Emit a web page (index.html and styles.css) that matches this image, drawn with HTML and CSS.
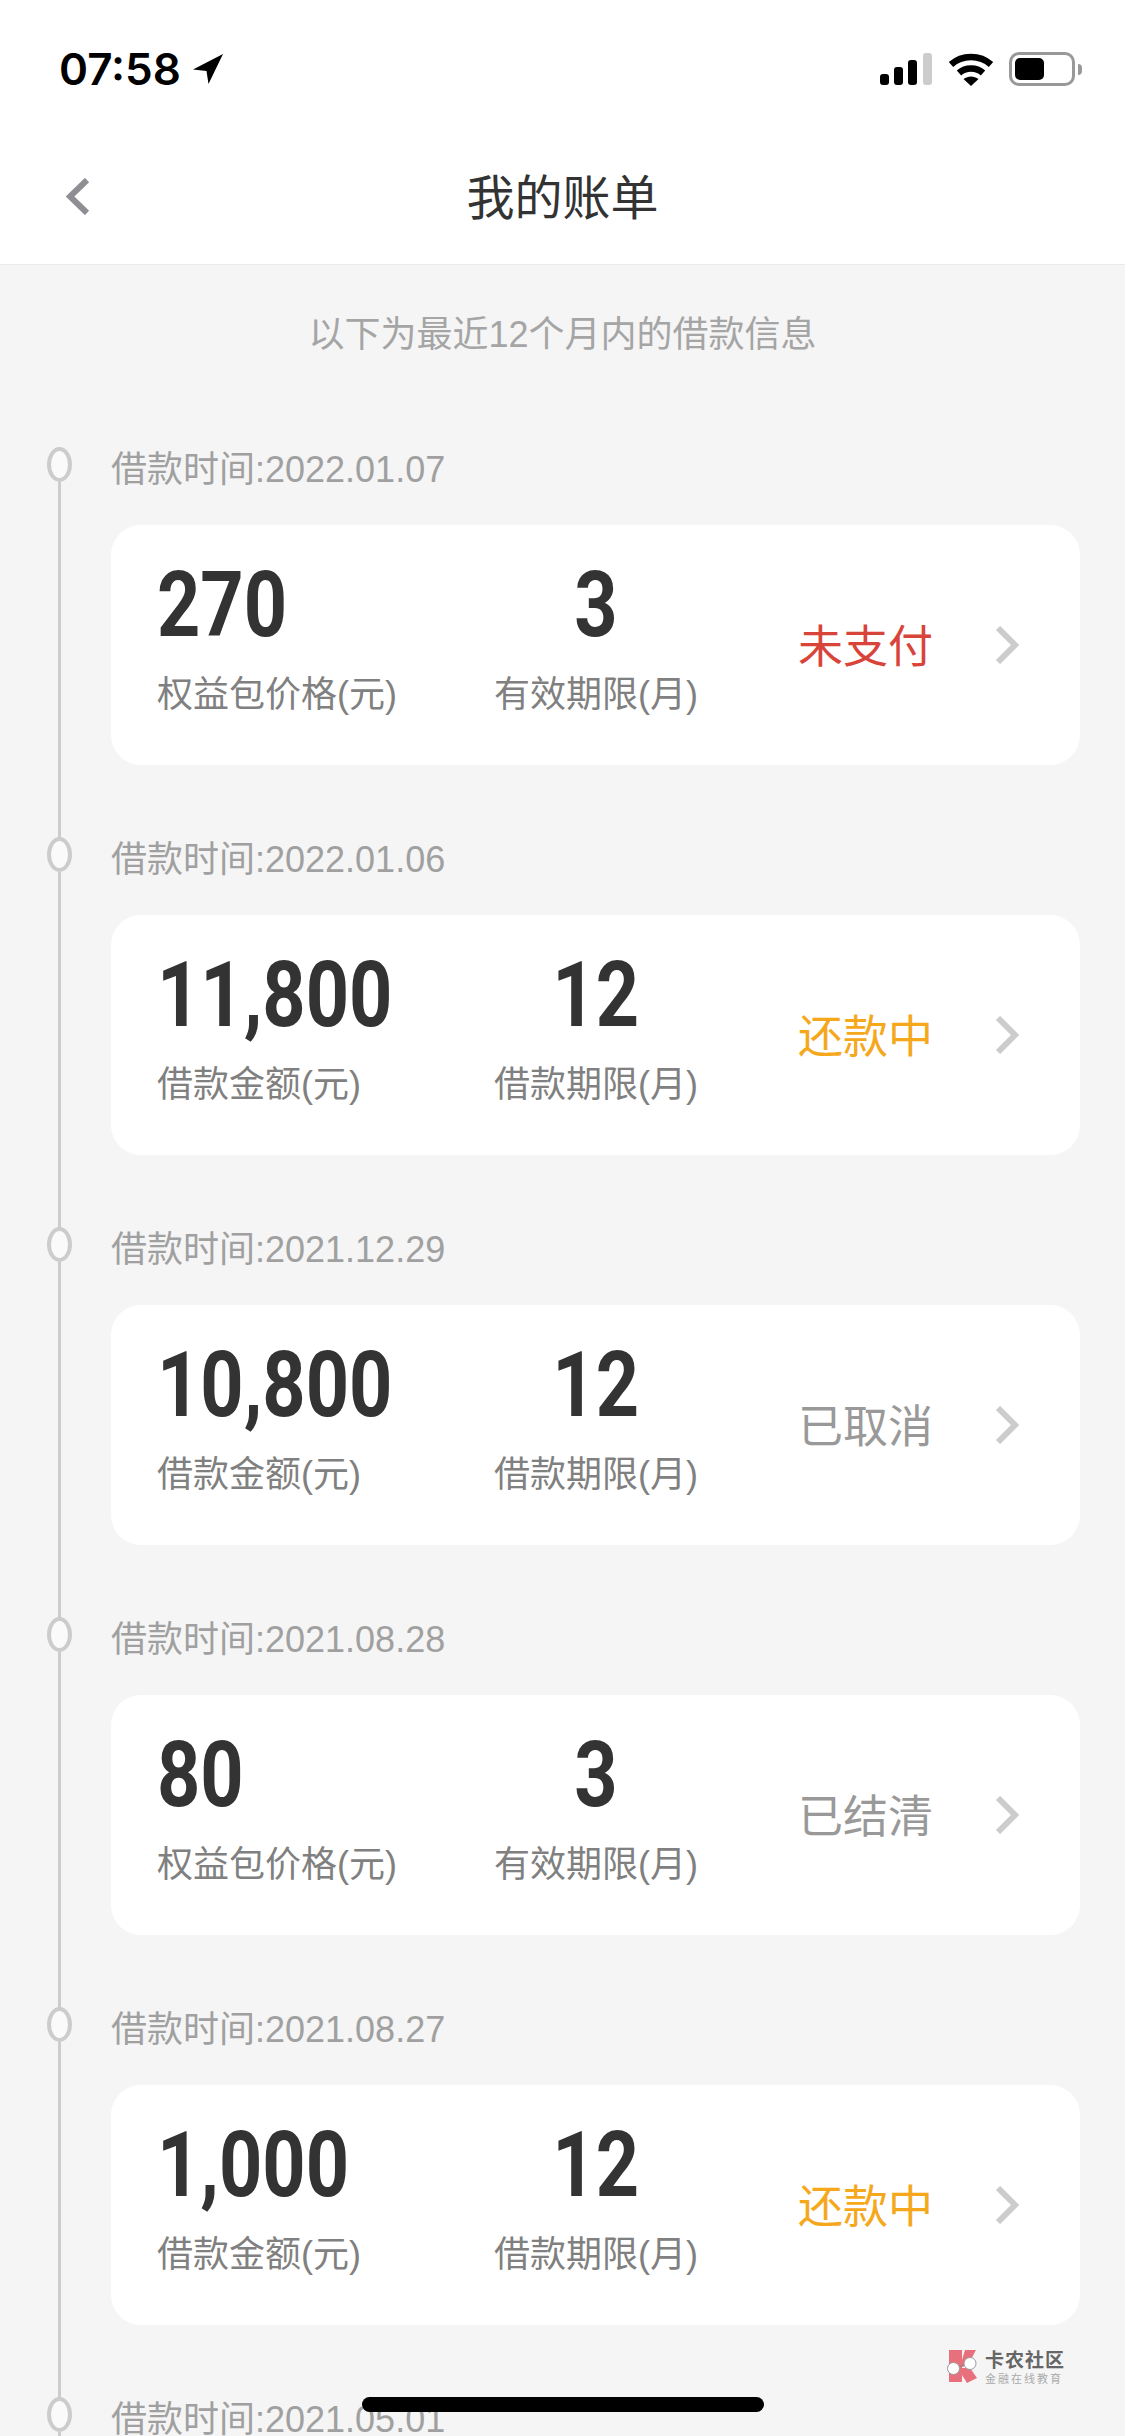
FILE: index.html
```html
<!DOCTYPE html>
<html lang="zh-CN">

<head>
    <meta charset="UTF-8">
    <title>我的账单</title>
    <link rel="stylesheet" href="styles.css">
</head>

<body>
    <div class="top">
        <div class="status">
            <div class="status-left">
                <span class="time">07:58</span>
                <svg class="arrow" width="30" height="30" viewBox="0 0 30 30"><path d="M30 0 L0 15.500 L13.500 17 L15.500 30 Z" fill="#000"/></svg>
            </div>
            <div class="status-right">
                <svg width="52" height="32" viewBox="0 0 52 32">
                    <rect x="0" y="21" width="9" height="11" rx="3" fill="#000"/>
                    <rect x="14" y="14" width="9" height="18" rx="3" fill="#000"/>
                    <rect x="28" y="7" width="9" height="25" rx="3" fill="#000"/>
                    <rect x="43" y="0" width="9" height="32" rx="3" fill="#ccc"/>
                </svg>
                <svg class="wifi" width="46" height="33" viewBox="0 0 46 33">
                    <path d="M3 11.500 C14 1.500 32 1.500 43 11.500" fill="none" stroke="#000" stroke-width="6.500"/>
                    <path d="M11 20 C17.500 14 28.500 14 35 20" fill="none" stroke="#000" stroke-width="6.500"/>
                    <path d="M15.500 26 C20 22.500 26 22.500 30.500 26 L23 33 Z" fill="#000"/>
                </svg>
                <div class="battery"><span class="battery-fill"></span></div>
                <span class="battery-cap"></span>
            </div>
        </div>
        <div class="nav">
            <svg class="back" width="24" height="37" viewBox="0 0 24 37"><path d="M21 2 L4 18.500 L21 35" fill="none" stroke="#8e8e93" stroke-width="6"/></svg>
            <h1>我的账单</h1>
        </div>
    </div>

    <div class="main">
        <p class="tip">以下为最近12个月内的借款信息</p>

        <div class="item">
            <i class="dot"></i>
            <div class="date">借款时间:2022.01.07</div>
            <div class="card">
                <div class="col col-amount"><b>270</b><span>权益包价格(元)</span></div>
                <div class="col col-term"><b>3</b><span>有效期限(月)</span></div>
                <div class="state red">未支付</div>
                <svg class="more" width="24" height="38" viewBox="0 0 24 38"><path d="M3 2 L20 19 L3 36" fill="none" stroke="#ccc" stroke-width="6"/></svg>
            </div>
        </div>

        <div class="item">
            <i class="dot"></i>
            <div class="date">借款时间:2022.01.06</div>
            <div class="card">
                <div class="col col-amount"><b>11,800</b><span>借款金额(元)</span></div>
                <div class="col col-term"><b>12</b><span>借款期限(月)</span></div>
                <div class="state orange">还款中</div>
                <svg class="more" width="24" height="38" viewBox="0 0 24 38"><path d="M3 2 L20 19 L3 36" fill="none" stroke="#ccc" stroke-width="6"/></svg>
            </div>
        </div>

        <div class="item">
            <i class="dot"></i>
            <div class="date">借款时间:2021.12.29</div>
            <div class="card">
                <div class="col col-amount"><b>10,800</b><span>借款金额(元)</span></div>
                <div class="col col-term"><b>12</b><span>借款期限(月)</span></div>
                <div class="state">已取消</div>
                <svg class="more" width="24" height="38" viewBox="0 0 24 38"><path d="M3 2 L20 19 L3 36" fill="none" stroke="#ccc" stroke-width="6"/></svg>
            </div>
        </div>

        <div class="item">
            <i class="dot"></i>
            <div class="date">借款时间:2021.08.28</div>
            <div class="card">
                <div class="col col-amount"><b>80</b><span>权益包价格(元)</span></div>
                <div class="col col-term"><b>3</b><span>有效期限(月)</span></div>
                <div class="state">已结清</div>
                <svg class="more" width="24" height="38" viewBox="0 0 24 38"><path d="M3 2 L20 19 L3 36" fill="none" stroke="#ccc" stroke-width="6"/></svg>
            </div>
        </div>

        <div class="item">
            <i class="dot"></i>
            <div class="date">借款时间:2021.08.27</div>
            <div class="card">
                <div class="col col-amount"><b>1,000</b><span>借款金额(元)</span></div>
                <div class="col col-term"><b>12</b><span>借款期限(月)</span></div>
                <div class="state orange">还款中</div>
                <svg class="more" width="24" height="38" viewBox="0 0 24 38"><path d="M3 2 L20 19 L3 36" fill="none" stroke="#ccc" stroke-width="6"/></svg>
            </div>
        </div>

        <div class="item">
            <i class="dot"></i>
            <div class="date">借款时间:2021.05.01</div>
        </div>
    </div>

    <div class="mark">
        <svg width="38" height="36" viewBox="0 0 38 36">
            <path d="M4 2 H17 V12 L20 2 H31 L23 17 L17 19 V34 H4 Z" fill="#e8707c"/>
            <path d="M17 20 H25 L32 30 L22 35 L17 27 Z" fill="#e8707c"/>
            <path d="M14 19 L19 17" fill="none" stroke="#888" stroke-width="1"/>
            <circle cx="8.500" cy="20.500" r="6" fill="#fff" stroke="#999" stroke-width="1"/>
            <circle cx="25" cy="15.500" r="6" fill="#fff" stroke="#999" stroke-width="1"/>
        </svg>
        <div class="mark-text">
            <strong>卡农社区</strong>
            <small>金融在线教育</small>
        </div>
    </div>
    <div class="home"></div>
</body>

</html>
```

FILE: styles.css
```css
* {
    margin: 0;
    padding: 0;
    box-sizing: border-box;
}

html,
body {
    height: 2436px;
    overflow: hidden;
}

body {
    position: relative;
    background: #f5f5f5;
    font-family: "Liberation Sans", "Noto Sans CJK SC", sans-serif;
}

.top {
    height: 265px;
    background: #fff;
    border-bottom: 1px solid #eaeaea;
}

.status {
    height: 132px;
    padding: 52px 43px 0 59px;
    display: flex;
    justify-content: space-between;
    align-items: flex-start;
}

.status-left {
    display: flex;
    align-items: center;
    height: 34px;
}

.time {
    font-family: Inter, "Liberation Sans", sans-serif;
    font-size: 44px;
    line-height: 34px;
    font-weight: 600;
    color: #000;
}

.arrow {
    margin-left: 12px;
}

.status-right {
    display: flex;
    align-items: center;
    height: 34px;
}

.wifi {
    margin-left: 16px;
}

.battery {
    width: 66px;
    height: 34px;
    margin-left: 15px;
    padding: 3px;
    border: 3px solid #999;
    border-radius: 10px;
}

.battery-fill {
    display: block;
    width: 29px;
    height: 22px;
    background: #000;
    border-radius: 5px;
}

.battery-cap {
    width: 4px;
    height: 11px;
    margin-left: 3px;
    background: #999;
    border-radius: 0 4px 4px 0;
}

.nav {
    height: 132px;
    position: relative;
    display: flex;
    align-items: center;
    justify-content: center;
}

.back {
    position: absolute;
    left: 66px;
    top: 46px;
}

.nav h1 {
    font-size: 48px;
    font-weight: 400;
    color: #333;
    line-height: 60px;
    margin-top: 2px;
}

.main {
    height: 2171px;
    overflow: hidden;
    padding: 0 45px 0 0;
}

.tip {
    margin-top: 44px;
    margin-bottom: 80px;
    font-size: 36px;
    line-height: 52px;
    color: #a5a5a5;
    text-align: center;
    padding-left: 45px;
}

.item {
    position: relative;
    height: 390px;
    padding-left: 111px;
}

/* 时间轴的竖线和圆点 */
.item::before {
    content: "";
    position: absolute;
    left: 58px;
    top: 41px;
    width: 3px;
    height: 356px;
    background: #ccc;
}

.dot {
    position: absolute;
    left: 47px;
    top: 6px;
    width: 25px;
    height: 35px;
    border: 4px solid #ccc;
    border-radius: 50%;
    background: #fafafa;
}

.date {
    height: 56px;
    margin-bottom: 28px;
    font-size: 36px;
    line-height: 58px;
    color: #a0a0a0;
}

.card {
    height: 240px;
    padding-left: 46px;
    display: flex;
    align-items: center;
    background: #fff;
    border-radius: 30px;
}

.col {
    display: flex;
    flex-direction: column;
    padding-bottom: 10px;
}

.col-amount {
    width: 338px;
    flex-shrink: 0;
}

.col-term {
    width: 202px;
    flex-shrink: 0;
    align-items: center;
}

/* 数字字体偏宽,横向压一下 */
.col b {
    height: 90px;
    font-family: Roboto, "Liberation Sans", sans-serif;
    font-size: 90px;
    line-height: 90px;
    font-weight: 700;
    color: #333;
    transform: scaleX(0.84);
    transform-origin: left center;
}

.col-term b {
    transform-origin: center;
}

.col span {
    margin-top: 19px;
    font-size: 36px;
    line-height: 50px;
    color: #808080;
    white-space: nowrap;
}

.state {
    width: 135px;
    margin-left: 101px;
    padding-top: 5px;
    font-size: 45px;
    line-height: 60px;
    color: #999;
    white-space: nowrap;
}

.red {
    color: #d9443a;
}

.orange {
    color: #f5a81c;
}

.more {
    margin-left: 62px;
}

.mark {
    position: absolute;
    left: 945px;
    top: 2348px;
    display: flex;
    gap: 2px;
}

.mark-text {
    display: flex;
    flex-direction: column;
    margin-top: 3px;
}

.mark-text strong {
    font-size: 19px;
    line-height: 20px;
    color: #666;
    letter-spacing: 1px;
}

.mark-text small {
    font-size: 11px;
    line-height: 14px;
    margin-top: 1px;
    color: #aaa;
    letter-spacing: 2px;
}

.home {
    position: absolute;
    left: 362px;
    top: 2397px;
    width: 402px;
    height: 15px;
    background: #000;
    border-radius: 8px;
}
```
